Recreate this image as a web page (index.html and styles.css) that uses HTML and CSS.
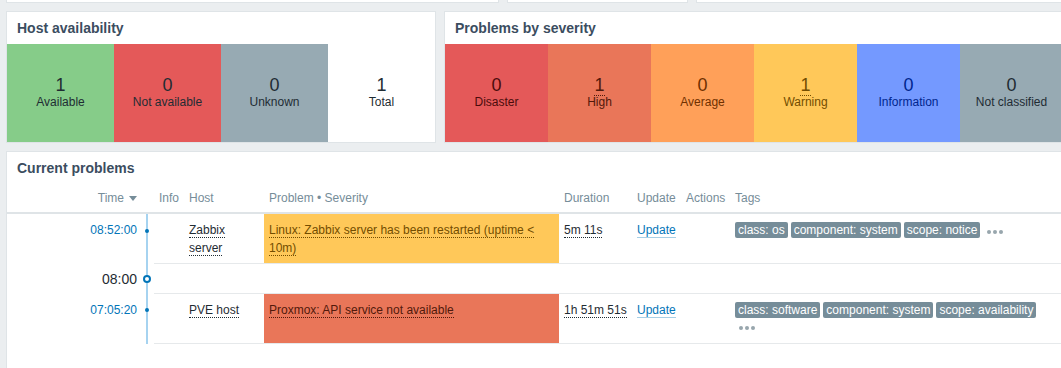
FILE: index.html
```html
<!DOCTYPE html>
<html lang="en">
  <head>
    <meta charset="UTF-8" />
    <title>Dashboard</title>
    <link rel="stylesheet" href="styles.css">
  </head>
  <body>
    <div class="dashboard">
      <div class="strip">
        <div class="stub stub-a"></div>
        <div class="stub stub-b"></div>
        <div class="stub stub-c"></div>
      </div>

      <div class="row">
        <section class="widget host-avail">
          <h4 class="widget-head">Host availability</h4>
          <div class="totals">
            <div class="cell available"><span class="count">1</span><span class="label">Available</span></div>
            <div class="cell not-available"><span class="count">0</span><span class="label">Not available</span></div>
            <div class="cell unknown"><span class="count">0</span><span class="label">Unknown</span></div>
            <div class="cell total"><span class="count">1</span><span class="label">Total</span></div>
          </div>
        </section>

        <section class="widget severity">
          <h4 class="widget-head">Problems by severity</h4>
          <div class="totals">
            <div class="cell sev disaster"><span class="count">0</span><span class="label">Disaster</span></div>
            <div class="cell sev high"><span class="count"><span class="hint">1</span></span><span class="label">High</span></div>
            <div class="cell sev average"><span class="count">0</span><span class="label">Average</span></div>
            <div class="cell sev warning"><span class="count"><span class="hint">1</span></span><span class="label">Warning</span></div>
            <div class="cell sev info"><span class="count">0</span><span class="label">Information</span></div>
            <div class="cell sev na"><span class="count">0</span><span class="label">Not classified</span></div>
          </div>
        </section>
      </div>

      <section class="widget problems">
        <h4 class="widget-head">Current problems</h4>
        <table class="problem-list">
          <colgroup>
            <col style="width: 135px">
            <col style="width: 12px">
            <col style="width: 30px">
            <col style="width: 80px">
            <col style="width: 295px">
            <col style="width: 73px">
            <col style="width: 49px">
            <col style="width: 49px">
            <col>
          </colgroup>
          <tr>
            <th class="col-time">Time<span class="arrow"></span></th>
            <th></th>
            <th>Info</th>
            <th>Host</th>
            <th>Problem &bull; Severity</th>
            <th>Duration</th>
            <th>Update</th>
            <th>Actions</th>
            <th>Tags</th>
          </tr>
          <tr>
            <td class="col-time"><a class="time-link">08:52:00</a></td>
            <td class="timeline"><span class="dot"></span></td>
            <td class="line"></td>
            <td class="line"><span class="hint">Zabbix server</span></td>
            <td class="line warning-bg"><span class="hint">Linux: Zabbix server has been restarted (uptime &lt; 10m)</span></td>
            <td class="line"><span class="hint">5m 11s</span></td>
            <td class="line"><a class="link">Update</a></td>
            <td class="line"></td>
            <td class="line">
              <div class="tags"><span class="tag">class: os</span><span class="tag">component: system</span><span class="tag">scope: notice</span><span class="more"><svg width="16" height="18" viewBox="0 0 16 18"><circle cx="2" cy="11" r="2" /><circle cx="8" cy="11" r="2" /><circle cx="14" cy="11" r="2" /></svg></span></div>
            </td>
          </tr>
          <tr class="sep">
            <td class="col-time date">08:00</td>
            <td class="timeline"><span class="marker"></span></td>
            <td class="line" colspan="7"></td>
          </tr>
          <tr>
            <td class="col-time"><a class="time-link">07:05:20</a></td>
            <td class="timeline"><span class="dot"></span></td>
            <td class="line"></td>
            <td class="line"><span class="hint">PVE host</span></td>
            <td class="line high-bg"><span class="hint">Proxmox: API service not available</span></td>
            <td class="line"><span class="hint">1h 51m 51s</span></td>
            <td class="line"><a class="link">Update</a></td>
            <td class="line"></td>
            <td class="line">
              <div class="tags"><span class="tag">class: software</span><span class="tag">component: system</span><span class="tag">scope: availability</span><span class="more"><svg width="16" height="18" viewBox="0 0 16 18"><circle cx="2" cy="9" r="2" /><circle cx="8" cy="9" r="2" /><circle cx="14" cy="9" r="2" /></svg></span></div>
            </td>
          </tr>
        </table>
      </section>
    </div>
  </body>
</html>
```

FILE: styles.css
```css
body {
  margin: 0;
  background: #ebeef0;
  font-family: "Liberation Sans", Arial, sans-serif;
  font-size: 12px;
  color: #1f2c33;
  overflow: hidden;
}
.dashboard {
  width: 1069px;
  padding-left: 6px;
  display: flex;
  flex-direction: column;
  gap: 8px;
}
.strip {
  display: flex;
  gap: 8px;
}
.stub {
  height: 2px;
  background: #fff;
  border: 1px solid #dfe4e7;
  border-top: 0;
}
.stub-a {
  width: 491px;
}
.stub-b {
  width: 179px;
}
.stub-c {
  flex: 1;
}
.row {
  display: flex;
  gap: 8px;
}
.widget {
  background: #fff;
  border: 1px solid #dfe4e7;
}
.widget-head {
  margin: 0;
  height: 32px;
  line-height: 32px;
  padding-left: 10px;
  font-size: 14px;
  font-weight: bold;
  color: #3b4d5f;
}
.host-avail {
  width: 428px;
}
.severity {
  flex: 1;
  overflow: hidden;
}
.totals {
  display: flex;
  height: 98px;
}
.cell {
  flex: 1;
  display: flex;
  flex-direction: column;
  align-items: center;
  justify-content: center;
  padding-bottom: 3px;
  box-sizing: border-box;
}
.sev {
  flex: 0 0 103px;
}
.count {
  font-size: 18px;
  line-height: 20px;
}
.label {
  line-height: 14px;
}
.available {
  background: #86cc89;
}
.not-available {
  background: #e45959;
}
.unknown {
  background: #97aab3;
}
.disaster {
  background: #e45959;
  color: #4b0c0c;
}
.high {
  background: #e97659;
  color: #52190b;
}
.average {
  background: #ffa059;
  color: #703000;
}
.warning {
  background: #ffc859;
  color: #734d00;
}
.info {
  background: #7499ff;
  color: #00268e;
}
.na {
  background: #97aab3;
  color: #1f2c33;
}
.hint {
  border-bottom: 1px dotted currentColor;
}

.problems {
  height: 260px;
}
.problem-list {
  width: 100%;
  border-collapse: collapse;
  table-layout: fixed;
}
.problem-list th {
  text-align: left;
  font-weight: normal;
  color: #768d99;
  padding: 5px;
  line-height: 18px;
  white-space: nowrap;
  border-bottom: 2px solid #dfe4e7;
}
.problem-list td {
  padding: 7px 5px 6px;
  line-height: 18px;
  vertical-align: top;
}
.problem-list .col-time {
  text-align: right;
}
.problem-list td.line {
  border-bottom: 1px solid #e6e9eb;
}
.arrow {
  display: inline-block;
  margin-left: 5px;
  border-left: 4px solid transparent;
  border-right: 4px solid transparent;
  border-top: 5px solid #768d99;
  vertical-align: middle;
}
.time-link,
.link {
  color: #0275b8;
  text-decoration: none;
}
.link {
  border-bottom: 1px solid rgba(2, 117, 184, 0.35);
}
.problem-list td.timeline {
  padding: 7px 0 6px;
  background: linear-gradient(to right, transparent 4px, #a6d3f0 4px, #a6d3f0 6px, transparent 6px);
}
.dot {
  display: inline-block;
  width: 4px;
  height: 4px;
  margin-left: 3px;
  border-radius: 50%;
  background: #0275b8;
  vertical-align: middle;
}
.marker {
  display: inline-block;
  width: 4px;
  height: 4px;
  margin-left: 1px;
  border: 2px solid #0275b8;
  border-radius: 50%;
  background: #fff;
  vertical-align: middle;
}
.problem-list .sep td {
  line-height: 17px;
}
.problem-list td.date {
  font-size: 14px;
}
.warning-bg {
  background: #ffc859;
  color: #734d00;
}
.high-bg {
  background: #e97659;
  color: #52190b;
}
.tags {
  max-width: 315px;
}
.tag {
  display: inline-block;
  line-height: 16px;
  padding: 0 3px;
  margin: 1px 3px 1px 0;
  vertical-align: top;
  border-radius: 2px;
  background: #768d99;
  color: #fff;
}
.more {
  display: inline-block;
  margin-left: 4px;
  vertical-align: top;
}
.more svg {
  display: block;
  fill: #98a6ad;
}
```
